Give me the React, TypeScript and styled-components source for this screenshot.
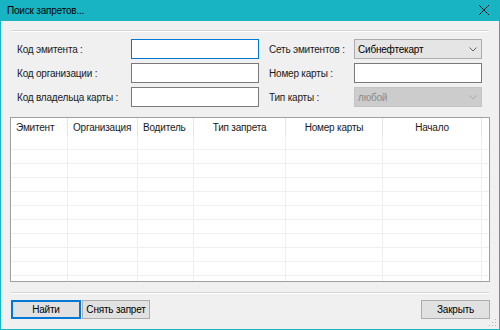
import styled, { createGlobalStyle } from "styled-components";

const GlobalStyle = createGlobalStyle`
  html, body {
    margin: 0;
    padding: 0;
    background: #f0f0f0;
  }
  * {
    box-sizing: border-box;
  }
`;

const Window = styled.div`
  position: relative;
  width: 500px;
  height: 330px;
  background: #f0f0f0;
  border: 1px solid #18b4c3;
  border-top: none;
  display: flex;
  flex-direction: column;
  font-family: "Liberation Sans", Arial, sans-serif;
  font-size: 10px;
  letter-spacing: -0.2px;
  color: #000;
`;

const TitleBar = styled.div`
  height: 21px;
  background: #18b4c3;
  display: flex;
  align-items: center;
  justify-content: space-between;
  padding: 0 6px 1px 7px;
  margin: 0 -1px;
`;

const Title = styled.span`
  color: #000;
`;

const CloseBtn = styled.span`
  display: flex;
  width: 12px;
  height: 12px;
  margin-right: 4px;
`;

const Body = styled.div`
  flex: 1;
  display: flex;
  flex-direction: column;
  padding: 0 9px 0 9px;
`;

const Separator = styled.div<{ $top: number }>`
  margin: ${(p) => p.$top}px 1px 0 1px;
  border-top: 1px solid #d5d5d5;
  border-bottom: 1px solid #ffffff;
`;

const Form = styled.div`
  margin-top: 7px;
  padding-left: 7px;
  display: grid;
  grid-template-columns: 114px 128px 10px 85px 128px;
  grid-auto-rows: 20px;
  row-gap: 4px;
`;

const Label = styled.label<{ $col: number }>`
  grid-column: ${(p) => p.$col};
  display: flex;
  align-items: center;
  color: #1a1a1a;
  white-space: nowrap;
`;

const TextBox = styled.div<{ $focused?: boolean; $col: number }>`
  grid-column: ${(p) => p.$col};
  background: #fff;
  border: 1px solid ${(p) => (p.$focused ? "#0078d7" : "#7a7a7a")};
`;

const Combo = styled.div<{ $disabled?: boolean; $col: number }>`
  grid-column: ${(p) => p.$col};
  display: flex;
  align-items: center;
  justify-content: space-between;
  padding: 0 4px 0 3px;
  background: ${(p) => (p.$disabled ? "#cccccc" : "#e5e5e5")};
  border: 1px solid ${(p) => (p.$disabled ? "#c4c4c4" : "#acacac")};
  color: ${(p) => (p.$disabled ? "#8a8a8a" : "#000")};
`;

const Table = styled.div`
  margin-top: 10px;
  height: 165px;
  background: #fff;
  border: 1px solid #a0a0a0;
  overflow: hidden;
`;

const Row = styled.div<{ $header?: boolean }>`
  display: flex;
  height: ${(p) => (p.$header ? 18 : 14)}px;
  border-bottom: ${(p) => (p.$header ? "none" : "1px solid #f0f0f0")};
`;

const Cell = styled.div<{ $w: number; $center?: boolean; $header?: boolean }>`
  width: ${(p) => p.$w}px;
  flex: none;
  display: flex;
  align-items: center;
  justify-content: ${(p) => (p.$center ? "center" : "flex-start")};
  padding-left: ${(p) => (p.$center ? 0 : 5)}px;
  border-right: 1px solid ${(p) => (p.$header ? "#e5e5e5" : "#f0f0f0")};
  color: #1a1a1a;
  white-space: nowrap;
`;

const Buttons = styled.div`
  margin-top: 6px;
  display: flex;
  gap: 1px;
  padding-left: 1px;
`;

const Button = styled.button<{ $default?: boolean; $w: number }>`
  width: ${(p) => p.$w}px;
  height: 19px;
  padding: 0;
  font-family: inherit;
  font-size: inherit;
  letter-spacing: inherit;
  white-space: nowrap;
  color: #000;
  background: #e1e1e1;
  border: 1px solid ${(p) => (p.$default ? "#0078d7" : "#adadad")};
  box-shadow: ${(p) => (p.$default ? "inset 0 0 0 1px #0078d7" : "none")};
`;

const Spacer = styled.div`
  flex: 1;
`;

const Grip = styled.svg`
  position: absolute;
  right: 2px;
  bottom: 2px;
`;

const columns = [
  { title: "Эмитент", w: 57 },
  { title: "Организация", w: 70 },
  { title: "Водитель", w: 56 },
  { title: "Тип запрета", w: 92, center: true },
  { title: "Номер карты", w: 97, center: true },
  { title: "Начало", w: 99, center: true },
];

function Chevron({ color }: { color: string }) {
  return (
    <svg width="8" height="5" viewBox="0 0 8 5">
      <path d="M0.5 0.5 L4 4 L7.5 0.5" fill="none" stroke={color} strokeWidth="1" />
    </svg>
  );
}

function App() {
  const rows = Array.from({ length: 11 });
  return (
    <>
      <GlobalStyle />
      <Window>
        <TitleBar>
          <Title>Поиск запретов...</Title>
          <CloseBtn>
            <svg width="12" height="12" viewBox="0 0 12 12">
              <path d="M1 1 L11 11 M11 1 L1 11" stroke="#111" strokeWidth="1" />
            </svg>
          </CloseBtn>
        </TitleBar>
        <Body>
          <Separator $top={9} />
          <Form>
            <Label $col={1}>Код эмитента :</Label>
            <TextBox $col={2} $focused />
            <Label $col={4}>Сеть эмитентов :</Label>
            <Combo $col={5}>
              <span>Сибнефтекарт</span>
              <Chevron color="#606060" />
            </Combo>

            <Label $col={1}>Код организации :</Label>
            <TextBox $col={2} />
            <Label $col={4}>Номер карты :</Label>
            <TextBox $col={5} />

            <Label $col={1}>Код владельца карты :</Label>
            <TextBox $col={2} />
            <Label $col={4}>Тип карты :</Label>
            <Combo $col={5} $disabled>
              <span>любой</span>
              <Chevron color="#a8a8a8" />
            </Combo>
          </Form>
          <Table>
            <Row $header>
              {columns.map((c) => (
                <Cell key={c.title} $w={c.w} $center={c.center} $header>
                  {c.title}
                </Cell>
              ))}
            </Row>
            {rows.map((_, i) => (
              <Row key={i}>
                {columns.map((c) => (
                  <Cell key={c.title} $w={c.w} />
                ))}
              </Row>
            ))}
          </Table>
          <Separator $top={10} />
          <Buttons>
            <Button $w={70} $default>
              Найти
            </Button>
            <Button $w={68}>Снять запрет</Button>
            <Spacer />
            <Button $w={69}>Закрыть</Button>
          </Buttons>
        </Body>
        <Grip width="8" height="8" viewBox="0 0 8 8">
          <rect x="6" y="0" width="1" height="1" fill="#b8b8b8" />
          <rect x="3" y="3" width="1" height="1" fill="#b8b8b8" />
          <rect x="6" y="3" width="1" height="1" fill="#b8b8b8" />
          <rect x="0" y="6" width="1" height="1" fill="#b8b8b8" />
          <rect x="3" y="6" width="1" height="1" fill="#b8b8b8" />
          <rect x="6" y="6" width="1" height="1" fill="#b8b8b8" />
        </Grip>
      </Window>
    </>
  );
}

export default App;
